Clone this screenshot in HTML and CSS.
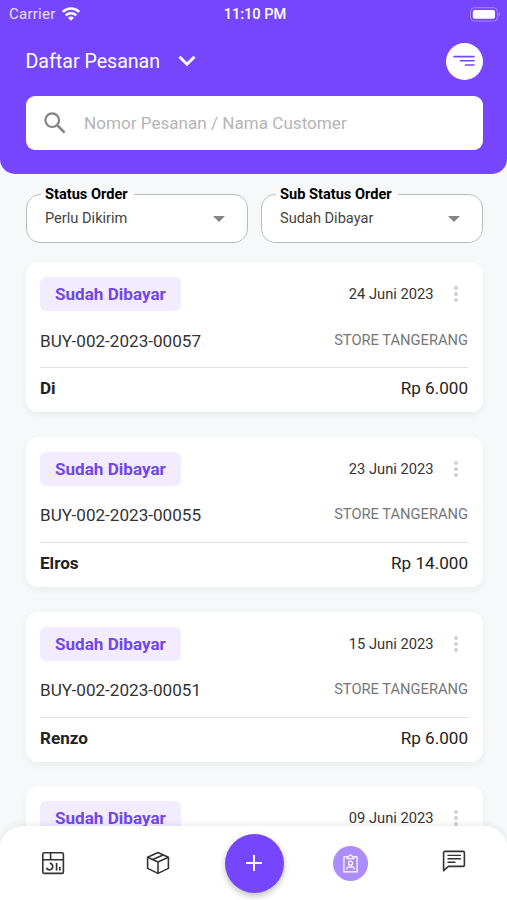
FILE: index.html
```html
<!DOCTYPE html>
<html lang="id">
<head>
    <meta charset="UTF-8">
    <meta name="viewport" content="width=device-width, initial-scale=1.0">
    <title>Daftar Pesanan</title>
    <link rel="stylesheet" href="styles.css">
</head>
<body>
    <div class="app">
        <!-- Header -->
        <header class="header">
            <div class="status-bar">
                <div class="carrier">
                    <span>Carrier</span>
                    <svg width="18" height="14" viewBox="0 0 18 14" fill="none" stroke="#fff" stroke-width="2.4">
                        <path d="M0.8 5C5.4 0.4 12.6 0.4 17.2 5"/>
                        <path d="M3.7 8.3C6.7 5.5 11.3 5.5 14.3 8.3"/>
                        <path d="M6 10.8C7.7 9.2 10.3 9.2 12 10.8L9 13.8Z" fill="#fff" stroke="none"/>
                    </svg>
                </div>
                <div class="clock">11:10 PM</div>
                <svg class="battery" width="31" height="15" viewBox="0 0 31 15">
                    <rect x="0.5" y="0.7" width="27" height="13.4" rx="4" fill="none" stroke="#fff" stroke-opacity="0.35"/>
                    <rect x="2.8" y="3" width="22.2" height="8.8" rx="2" fill="#fff"/>
                    <path d="M28.8 5.2C30.6 6 30.6 8.8 28.8 9.6Z" fill="#fff" fill-opacity="0.4"/>
                </svg>
            </div>
            <div class="title-row">
                <h1 class="page-title">Daftar Pesanan</h1>
                <svg width="18" height="12" viewBox="0 0 18 12" fill="none" stroke="#fff" stroke-width="3">
                    <path d="M1.5 1.8L9 9.2L16.5 1.8"/>
                </svg>
                <button class="sort-button">
                    <svg width="22" height="12" viewBox="0 0 22 12" stroke="#7646ff" stroke-width="1.6" stroke-linecap="round">
                        <path d="M1 1.6H21M7.5 5.8H21M12.5 10H21"/>
                    </svg>
                </button>
            </div>
            <div class="search-box">
                <svg width="22" height="22" viewBox="0 0 22 22" fill="none" stroke="#858585" stroke-width="2.2">
                    <circle cx="8.2" cy="8.2" r="6.8"/>
                    <path d="M13 13L20.6 20.6" stroke-width="2.6"/>
                </svg>
                <span class="placeholder">Nomor Pesanan / Nama Customer</span>
            </div>
        </header>

        <!-- Filter -->
        <div class="filters">
            <fieldset class="filter">
                <legend>Status Order</legend>
                <span>Perlu Dikirim</span>
                <i class="caret"></i>
            </fieldset>
            <fieldset class="filter">
                <legend>Sub Status Order</legend>
                <span>Sudah Dibayar</span>
                <i class="caret"></i>
            </fieldset>
        </div>

        <!-- Daftar pesanan -->
        <main class="order-list">
            <div class="order-card">
                <div class="order-top">
                    <span class="badge">Sudah Dibayar</span>
                    <span class="date">24 Juni 2023</span>
                    <span class="more"><i></i><i></i><i></i></span>
                </div>
                <div class="order-info">
                    <span class="order-number">BUY-002-2023-00057</span>
                    <span class="store">STORE TANGERANG</span>
                </div>
                <div class="order-bottom">
                    <span class="customer">Di</span>
                    <span class="total">Rp 6.000</span>
                </div>
            </div>
            <div class="order-card">
                <div class="order-top">
                    <span class="badge">Sudah Dibayar</span>
                    <span class="date">23 Juni 2023</span>
                    <span class="more"><i></i><i></i><i></i></span>
                </div>
                <div class="order-info">
                    <span class="order-number">BUY-002-2023-00055</span>
                    <span class="store">STORE TANGERANG</span>
                </div>
                <div class="order-bottom">
                    <span class="customer">Elros</span>
                    <span class="total">Rp 14.000</span>
                </div>
            </div>
            <div class="order-card">
                <div class="order-top">
                    <span class="badge">Sudah Dibayar</span>
                    <span class="date">15 Juni 2023</span>
                    <span class="more"><i></i><i></i><i></i></span>
                </div>
                <div class="order-info">
                    <span class="order-number">BUY-002-2023-00051</span>
                    <span class="store">STORE TANGERANG</span>
                </div>
                <div class="order-bottom">
                    <span class="customer">Renzo</span>
                    <span class="total">Rp 6.000</span>
                </div>
            </div>
            <div class="order-card">
                <div class="order-top">
                    <span class="badge">Sudah Dibayar</span>
                    <span class="date">09 Juni 2023</span>
                    <span class="more"><i></i><i></i><i></i></span>
                </div>
            </div>
        </main>

        <!-- Navigasi bawah -->
        <nav class="bottom-nav">
            <a class="nav-item">
                <svg width="24" height="24" viewBox="0 0 24 24" fill="none" stroke="#333" stroke-width="1.6">
                    <rect x="1.8" y="1.8" width="20.6" height="20.6" rx="1.4"/>
                    <path d="M1.8 8.8H22.4M9.6 1.8V8.8"/>
                    <path d="M8.8 12.2A3.3 3.3 0 1 1 5.4 16.8" stroke-width="1.7"/>
                    <path d="M15.6 12V19.6M18.8 16V19.6" stroke-width="1.7"/>
                </svg>
            </a>
            <a class="nav-item">
                <svg width="24" height="24" viewBox="0 0 24 24" fill="none" stroke="#333" stroke-width="1.6" stroke-linejoin="round">
                    <path d="M12 1.6L22.4 6.2V17.4L12 22.4L1.6 17.4V6.2Z"/>
                    <path d="M1.6 6.2L12 11L22.4 6.2M12 11V22.4M6.6 8.6L17.2 3.9"/>
                </svg>
            </a>
            <a class="nav-add">
                <svg width="18" height="18" viewBox="0 0 18 18" stroke="#fff" stroke-width="2">
                    <path d="M9 1V17M1 9H17"/>
                </svg>
            </a>
            <a class="nav-item">
                <span class="nav-active">
                    <svg width="15" height="19" viewBox="0 0 16 20" fill="none" stroke="#fff" stroke-width="1.3" stroke-linejoin="round">
                        <path d="M4.6 3H1V19H15V3H11.4"/>
                        <path d="M4.6 4.8V2.6H6.2C6.4 0.4 9.6 0.4 9.8 2.6H11.4V4.8Z"/>
                        <circle cx="8" cy="9.6" r="2.1"/>
                        <path d="M4 16.4V15.4C4.4 13.8 6 13.4 6.6 13.2L8 14.4L9.4 13.2C10 13.4 11.6 13.8 12 15.4V16.4"/>
                    </svg>
                </span>
            </a>
            <a class="nav-item nav-chat">
                <svg width="24" height="22" viewBox="0 0 24 22" fill="none" stroke="#333" stroke-width="1.6" stroke-linejoin="round" stroke-linecap="round">
                    <path d="M3 1.4H21A1.4 1.4 0 0 1 22.4 2.8V15A1.4 1.4 0 0 1 21 16.4H6.4L1.6 20.6V2.8A1.4 1.4 0 0 1 3 1.4Z"/>
                    <path d="M6 5.4H18.4M6 8.8H18.4M6 12.2H13" stroke-width="1.4"/>
                </svg>
            </a>
        </nav>
    </div>
</body>
</html>
```

FILE: styles.css
```css
* {
    box-sizing: border-box;
    margin: 0;
    padding: 0;
    font-family: Roboto, sans-serif;
}

body {
    background: #f7f8fa;
    color: #333;
}

.app {
    position: relative;
    height: 900px;
    overflow: hidden;
}

/* Header */
.header {
    height: 174px;
    padding: 0 24.5px 0 25.5px;
    background: #7646ff;
    border-radius: 0 0 15px 15px;
    color: #fff;
}

.status-bar {
    display: grid;
    grid-template-columns: 1fr auto 1fr;
    align-items: center;
    height: 28px;
    margin: 0 -18.5px 0 -16.5px;
}

.carrier {
    display: flex;
    align-items: center;
    gap: 6px;
    font-size: 15px;
    letter-spacing: 0.25px;
    color: #e8e0ff;
}

.clock {
    font-size: 14.6px;
    font-weight: 500;
}

.battery {
    justify-self: end;
}

.title-row {
    display: flex;
    align-items: center;
    height: 38px;
    margin-top: 14px;
}

.page-title {
    font-size: 19.6px;
    font-weight: 400;
    margin-right: 18px;
}

.sort-button {
    display: flex;
    align-items: center;
    justify-content: center;
    width: 37px;
    height: 37px;
    margin-left: auto;
    border: none;
    border-radius: 50%;
    background: #fff;
}

.search-box {
    display: flex;
    align-items: center;
    height: 54px;
    margin-top: 16px;
    padding-left: 18px;
    border-radius: 9px;
    background: #fff;
}

.placeholder {
    margin-left: 18.5px;
    font-size: 17.1px;
    color: #b5b5b5;
}

/* Filter */
.filters {
    display: flex;
    gap: 13px;
    padding: 12px 24.5px 0 25.5px;
}

.filter {
    display: flex;
    flex: 1;
    justify-content: space-between;
    height: 57px;
    min-width: 0;
    padding: 6px 22px 0 18.5px;
    border: 1px solid #b9bcbe;
    border-radius: 14px;
    background: #fff;
    font-size: 14.6px;
    color: #444;
}

.filter legend {
    height: 17px;
    margin-left: -4px;
    padding: 0 6px 0 4px;
    font-size: 14.6px;
    font-weight: 700;
    line-height: 17px;
    color: #000;
}

.caret {
    margin-top: 7px;
    height: 0;
    border: 6px solid transparent;
    border-top-color: #858585;
    border-bottom: none;
}

/* Daftar pesanan */
.order-list {
    display: flex;
    flex-direction: column;
    gap: 24.7px;
    padding: 19.2px 24.5px 0 25.5px;
}

.order-card {
    height: 150px;
    flex-shrink: 0;
    padding: 15px 14.5px 0;
    border-radius: 12px;
    background: #fff;
    box-shadow: 0 3px 8px rgba(0, 0, 0, 0.05);
}

.order-top {
    display: flex;
    align-items: center;
    height: 34px;
}

.badge {
    padding: 0 15px;
    border-radius: 6px;
    background: #f3ebff;
    font-size: 17.1px;
    font-weight: 700;
    line-height: 34px;
    color: #7048e8;
}

.date {
    margin-left: auto;
    font-size: 14.7px;
}

.more {
    display: flex;
    flex-direction: column;
    gap: 2px;
    margin: 0 10px 0 20.5px;
}

.more i {
    width: 4px;
    height: 4px;
    border-radius: 50%;
    background: #d0d0d0;
}

.order-info {
    display: flex;
    justify-content: space-between;
    height: 57px;
    padding-top: 19.4px;
    border-bottom: 1px solid #e2e2e2;
}

.order-number {
    font-size: 17.1px;
}

.store {
    font-size: 14.7px;
    color: #777;
}

.order-bottom {
    display: flex;
    justify-content: space-between;
    padding-top: 10px;
    font-size: 17.1px;
    color: #222;
}

.customer {
    font-weight: 700;
}

/* Navigasi bawah */
.bottom-nav {
    position: absolute;
    left: 0;
    right: 0;
    bottom: 0;
    display: grid;
    grid-template-columns: 106px 103px 90px 102px 105px;
    align-items: center;
    justify-items: center;
    height: 74px;
    border-radius: 22px 22px 0 0;
    background: #fff;
    box-shadow: 0 -2px 6px rgba(0, 0, 0, 0.07);
}

.nav-item {
    display: flex;
}

.nav-add {
    display: flex;
    align-items: center;
    justify-content: center;
    width: 59px;
    height: 59px;
    border-radius: 50%;
    background: #7646ff;
    box-shadow: 0 3px 6px rgba(0, 0, 0, 0.25);
}

.nav-active {
    display: flex;
    align-items: center;
    justify-content: center;
    width: 35px;
    height: 35px;
    border-radius: 50%;
    background: #ad8cfe;
}

.nav-chat {
    margin-bottom: 4px;
}
```
